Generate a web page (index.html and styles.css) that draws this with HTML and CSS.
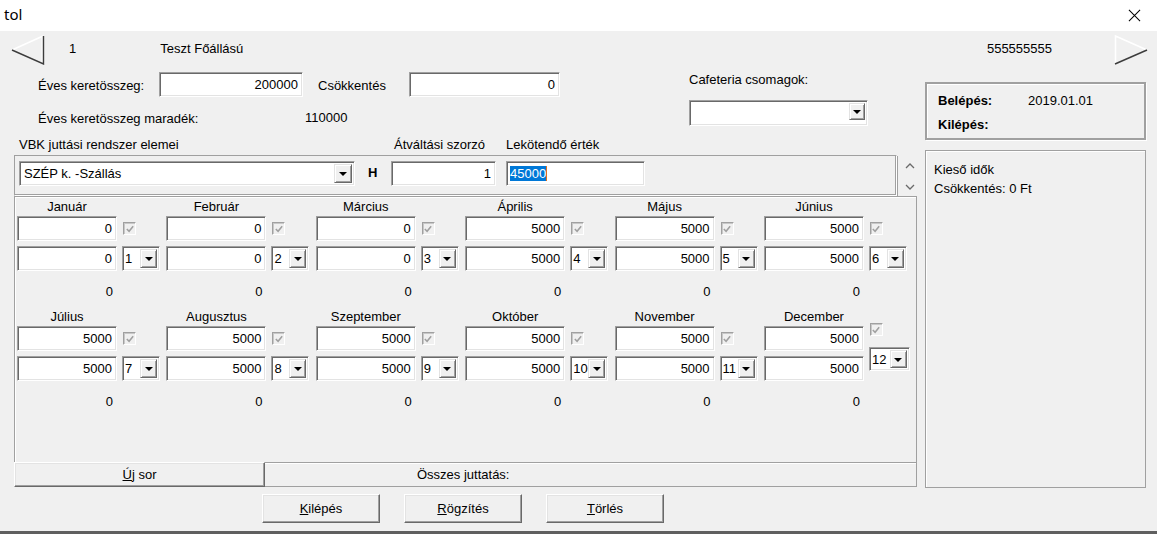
FILE: index.html
```html
<!DOCTYPE html>
<html>
<head>
  <meta charset="UTF-8">
  <title>tol</title>
  <link rel="stylesheet" href="styles.css">
</head>
<body>

<div class="titlebar">
	<span class="title">tol</span>
	<svg class="close" viewBox="0 0 14 14"><path d="M1 1 L13 13 M13 1 L1 13" stroke="#000" stroke-width="1.1" fill="none"/></svg>
</div>

<div class="page">

<div class="nav">
	<svg class="arrow arrow-left" viewBox="0 0 34 30">
		<path d="M1 15 L32 1" stroke="#fff" stroke-width="1.6" fill="none"/>
		<path d="M31 1.5 L31 28.5" stroke="#fff" stroke-width="1" fill="none"/>
		<path d="M32.5 1 L32.5 29 L1 15" stroke="#3c3c3c" stroke-width="1.4" fill="none"/>
	</svg>
	<span class="num">1</span>
	<span class="name">Teszt Főállású</span>
	<span class="code">555555555</span>
	<svg class="arrow arrow-right" viewBox="0 0 34 30">
		<path d="M1.5 29 L1.5 1 L33 15" stroke="#fff" stroke-width="1.6" fill="none"/>
		<path d="M1 29 L33 15" stroke="#3c3c3c" stroke-width="1.5" fill="none"/>
	</svg>
</div>

<div class="main">
	<div class="left">

		<div class="top">
			<div class="fields">
				<div class="row">
					<span class="lbl lbl-eves">Éves keretösszeg:</span>
					<div class="field w-eves">200000</div>
					<span class="lbl lbl-csokk">Csökkentés</span>
					<div class="field w-csokk">0</div>
				</div>
				<div class="row row-rest">
					<span class="lbl lbl-rest">Éves keretösszeg maradék:</span>
					<span>110000</span>
				</div>
			</div>
			<div class="cafe">
				<div class="cafe-lbl">Cafeteria csomagok:</div>
				<div class="combo combo-cafe"><span class="combo-text"></span><span class="combo-btn"><b></b></span></div>
			</div>
		</div>

		<div class="vbk-labels">
			<span class="vbk-lbl1">VBK juttási rendszer elemei</span>
			<span class="vbk-lbl2">Átváltási szorzó</span>
			<span>Lekötendő érték</span>
		</div>

		<div class="vbk-row">
			<div class="vbk-box">
				<div class="combo combo-vbk"><span class="combo-text">SZÉP k. -Szállás</span><span class="combo-btn"><b></b></span></div>
				<span class="h">H</span>
				<div class="field w-szorzo">1</div>
				<div class="field w-lekot"><span class="sel">45000</span><span class="caret"></span></div>
			</div>
			<div class="scroll">
				<svg viewBox="0 0 10 6"><path d="M1 5 L5 1 L9 5" stroke="#6a6a6a" stroke-width="1.3" fill="none"/></svg>
				<svg viewBox="0 0 10 6"><path d="M1 1 L5 5 L9 1" stroke="#6a6a6a" stroke-width="1.3" fill="none"/></svg>
			</div>
		</div>

		<div class="months">
			<div class="month">
				<div class="m-name">Január</div>
				<div class="m-row"><div class="field m-in">0</div><span class="check"><svg viewBox="0 0 11 11"><path d="M2 5.5 L4.5 8 L9 2.5" stroke="#a0a0a0" stroke-width="1.7" fill="none"/></svg></span></div>
				<div class="m-row"><div class="field m-in">0</div><div class="combo combo-sm"><span class="combo-text">1</span><span class="combo-btn"><b></b></span></div></div>
				<div class="m-total">0</div>
			</div>
			<div class="month">
				<div class="m-name">Február</div>
				<div class="m-row"><div class="field m-in">0</div><span class="check"><svg viewBox="0 0 11 11"><path d="M2 5.5 L4.5 8 L9 2.5" stroke="#a0a0a0" stroke-width="1.7" fill="none"/></svg></span></div>
				<div class="m-row"><div class="field m-in">0</div><div class="combo combo-sm"><span class="combo-text">2</span><span class="combo-btn"><b></b></span></div></div>
				<div class="m-total">0</div>
			</div>
			<div class="month">
				<div class="m-name">Március</div>
				<div class="m-row"><div class="field m-in">0</div><span class="check"><svg viewBox="0 0 11 11"><path d="M2 5.5 L4.5 8 L9 2.5" stroke="#a0a0a0" stroke-width="1.7" fill="none"/></svg></span></div>
				<div class="m-row"><div class="field m-in">0</div><div class="combo combo-sm"><span class="combo-text">3</span><span class="combo-btn"><b></b></span></div></div>
				<div class="m-total">0</div>
			</div>
			<div class="month">
				<div class="m-name">Április</div>
				<div class="m-row"><div class="field m-in">5000</div><span class="check"><svg viewBox="0 0 11 11"><path d="M2 5.5 L4.5 8 L9 2.5" stroke="#a0a0a0" stroke-width="1.7" fill="none"/></svg></span></div>
				<div class="m-row"><div class="field m-in">5000</div><div class="combo combo-sm"><span class="combo-text">4</span><span class="combo-btn"><b></b></span></div></div>
				<div class="m-total">0</div>
			</div>
			<div class="month">
				<div class="m-name">Május</div>
				<div class="m-row"><div class="field m-in">5000</div><span class="check"><svg viewBox="0 0 11 11"><path d="M2 5.5 L4.5 8 L9 2.5" stroke="#a0a0a0" stroke-width="1.7" fill="none"/></svg></span></div>
				<div class="m-row"><div class="field m-in">5000</div><div class="combo combo-sm"><span class="combo-text">5</span><span class="combo-btn"><b></b></span></div></div>
				<div class="m-total">0</div>
			</div>
			<div class="month">
				<div class="m-name">Június</div>
				<div class="m-row"><div class="field m-in">5000</div><span class="check"><svg viewBox="0 0 11 11"><path d="M2 5.5 L4.5 8 L9 2.5" stroke="#a0a0a0" stroke-width="1.7" fill="none"/></svg></span></div>
				<div class="m-row"><div class="field m-in">5000</div><div class="combo combo-sm"><span class="combo-text">6</span><span class="combo-btn"><b></b></span></div></div>
				<div class="m-total">0</div>
			</div>

			<div class="month">
				<div class="m-name">Július</div>
				<div class="m-row"><div class="field m-in">5000</div><span class="check"><svg viewBox="0 0 11 11"><path d="M2 5.5 L4.5 8 L9 2.5" stroke="#a0a0a0" stroke-width="1.7" fill="none"/></svg></span></div>
				<div class="m-row"><div class="field m-in">5000</div><div class="combo combo-sm"><span class="combo-text">7</span><span class="combo-btn"><b></b></span></div></div>
				<div class="m-total">0</div>
			</div>
			<div class="month">
				<div class="m-name">Augusztus</div>
				<div class="m-row"><div class="field m-in">5000</div><span class="check"><svg viewBox="0 0 11 11"><path d="M2 5.5 L4.5 8 L9 2.5" stroke="#a0a0a0" stroke-width="1.7" fill="none"/></svg></span></div>
				<div class="m-row"><div class="field m-in">5000</div><div class="combo combo-sm"><span class="combo-text">8</span><span class="combo-btn"><b></b></span></div></div>
				<div class="m-total">0</div>
			</div>
			<div class="month">
				<div class="m-name">Szeptember</div>
				<div class="m-row"><div class="field m-in">5000</div><span class="check"><svg viewBox="0 0 11 11"><path d="M2 5.5 L4.5 8 L9 2.5" stroke="#a0a0a0" stroke-width="1.7" fill="none"/></svg></span></div>
				<div class="m-row"><div class="field m-in">5000</div><div class="combo combo-sm"><span class="combo-text">9</span><span class="combo-btn"><b></b></span></div></div>
				<div class="m-total">0</div>
			</div>
			<div class="month">
				<div class="m-name">Október</div>
				<div class="m-row"><div class="field m-in">5000</div><span class="check"><svg viewBox="0 0 11 11"><path d="M2 5.5 L4.5 8 L9 2.5" stroke="#a0a0a0" stroke-width="1.7" fill="none"/></svg></span></div>
				<div class="m-row"><div class="field m-in">5000</div><div class="combo combo-sm"><span class="combo-text">10</span><span class="combo-btn"><b></b></span></div></div>
				<div class="m-total">0</div>
			</div>
			<div class="month">
				<div class="m-name">November</div>
				<div class="m-row"><div class="field m-in">5000</div><span class="check"><svg viewBox="0 0 11 11"><path d="M2 5.5 L4.5 8 L9 2.5" stroke="#a0a0a0" stroke-width="1.7" fill="none"/></svg></span></div>
				<div class="m-row"><div class="field m-in">5000</div><div class="combo combo-sm"><span class="combo-text">11</span><span class="combo-btn"><b></b></span></div></div>
				<div class="m-total">0</div>
			</div>
			<div class="month">
				<div class="m-name">December</div>
				<div class="m-row"><div class="field m-in">5000</div><span class="check check-dec"><svg viewBox="0 0 11 11"><path d="M2 5.5 L4.5 8 L9 2.5" stroke="#a0a0a0" stroke-width="1.7" fill="none"/></svg></span></div>
				<div class="m-row"><div class="field m-in">5000</div><div class="combo combo-sm combo-dec"><span class="combo-text">12</span><span class="combo-btn"><b></b></span></div></div>
				<div class="m-total">0</div>
			</div>
		</div>

		<div class="sum-bar">
			<button class="btn btn-new"><u>Ú</u>j sor</button>
			<div class="sum-lbl">Összes juttatás:</div>
		</div>
	</div>

	<div class="right">
		<div class="info">
			<div class="info-row"><b class="info-key">Belépés:</b><span>2019.01.01</span></div>
			<div class="info-row"><b class="info-key">Kilépés:</b></div>
		</div>
		<div class="notes">
			<div>Kieső idők</div>
			<div>Csökkentés: 0 Ft</div>
		</div>
	</div>
</div>

<div class="buttons">
	<button class="btn btn-act"><u>K</u>ilépés</button>
	<button class="btn btn-act"><u>R</u>ögzítés</button>
	<button class="btn btn-act"><u>T</u>örlés</button>
</div>

</div>

<div class="edge"></div>

</body>
</html>
```

FILE: styles.css
```css
* {
	box-sizing: border-box;
}

body {
	margin: 0;
	width: 1157px;
	height: 534px;
	overflow: hidden;
	display: flex;
	flex-direction: column;
	background-color: #f0f0f0;
	font-family: "Liberation Sans", Arial, sans-serif;
	font-size: 13px;
	color: #000;
}

/* White window caption */
.titlebar {
	height: 31px;
	flex: none;
	background-color: #fff;
	display: flex;
	align-items: center;
	justify-content: space-between;
	padding: 0 16px 0 4px;
}

.title {
	font-family: "Noto Sans", sans-serif;
	font-size: 15px;
	margin-top: -3px;
}

.close {
	width: 13px;
	height: 13px;
	margin-top: -1px;
}

.page {
	flex: 1;
}

/* Record navigation row */
.nav {
	height: 35px;
	display: flex;
	align-items: center;
}

.arrow {
	width: 34px;
	height: 30px;
	margin-top: 2px;
}

.arrow-left {
	margin-left: 11px;
}

.num {
	margin-left: 24px;
}

.name {
	margin-left: 84px;
}

.code {
	margin-left: auto;
	margin-right: 62px;
}

.arrow-right {
	margin-right: 9px;
}

.main {
	display: flex;
	padding-left: 14px;
	gap: 8px;
}

.left {
	width: 903px;
}

/* Sunken text box */
.field {
	height: 25px;
	background-color: #fff;
	border: 1px solid;
	border-color: #a0a0a0 #fff #fff #a0a0a0;
	box-shadow: inset 1px 1px 0 #696969, inset -1px -1px 0 #e3e3e3;
	display: flex;
	align-items: center;
	justify-content: flex-end;
	padding: 0 4px;
	white-space: nowrap;
}

/* Combo box */
.combo {
	height: 25px;
	background-color: #fff;
	border: 1px solid;
	border-color: #a0a0a0 #fff #fff #a0a0a0;
	box-shadow: inset 1px 1px 0 #696969, inset -1px -1px 0 #e3e3e3;
	display: flex;
	padding: 2px;
	overflow: hidden;
}

.combo-text {
	flex: 1;
	overflow: hidden;
	white-space: nowrap;
	padding-left: 2px;
	line-height: 20px;
}

.combo-btn {
	width: 18px;
	flex: none;
	background-color: #f0f0f0;
	border: 1px solid;
	border-color: #e3e3e3 #696969 #696969 #e3e3e3;
	box-shadow: inset 1px 1px 0 #fff, inset -1px -1px 0 #a0a0a0;
	display: flex;
	align-items: center;
	justify-content: center;
}

.combo-btn b {
	width: 0;
	height: 0;
	border-top: 4px solid #000;
	border-left: 4px solid transparent;
	border-right: 4px solid transparent;
	margin-top: 1px;
}

/* Top fields */
.top {
	display: flex;
	padding-top: 6px;
}

.fields {
	width: 675px;
}

.row {
	display: flex;
	align-items: center;
	height: 25px;
}

.lbl {
	padding-top: 2px;
}

.lbl-eves {
	padding-left: 24px;
	width: 145px;
}

.w-eves {
	width: 144px;
}

.lbl-csokk {
	margin-left: 15px;
	width: 91px;
}

.w-csokk {
	width: 151px;
}

.row-rest {
	margin-top: 10px;
	height: 20px;
}

.lbl-rest {
	padding-left: 24px;
	width: 291px;
}

.cafe-lbl {
	line-height: 16px;
}

.combo-cafe {
	width: 179px;
	height: 26px;
	margin-top: 12px;
	align-items: flex-start;
}

.combo-cafe .combo-btn {
	height: 17px;
	width: 16px;
}

/* VBK element row */
.vbk-labels {
	display: flex;
	margin-top: 9px;
	line-height: 18px;
}

.vbk-lbl1 {
	padding-left: 5px;
	width: 380px;
}

.vbk-lbl2 {
	width: 112px;
}

.vbk-row {
	display: flex;
	margin-top: 1px;
}

.vbk-box {
	width: 883px;
	height: 41px;
	border: 1px solid;
	border-color: #a0a0a0 #fff #fff #a0a0a0;
	box-shadow: inset -1px -1px 0 #a0a0a0, 1px 1px 0 #a0a0a0;
	display: flex;
	align-items: flex-start;
	padding: 5px 4px;
}

.combo-vbk {
	width: 336px;
}

.h {
	font-weight: bold;
	margin: 4px 0 0 13px;
	width: 10px;
}

.w-szorzo {
	width: 105px;
	margin-left: 13px;
}

.w-lekot {
	width: 139px;
	margin-left: 10px;
	justify-content: flex-start;
	padding-left: 3px;
}

.sel {
	background-color: #0078d7;
	color: #fff;
	line-height: 15px;
}

.caret {
	width: 1px;
	height: 15px;
	background-color: #e07020;
}

.scroll {
	display: flex;
	flex-direction: column;
	gap: 15px;
	padding: 8px 0 0 8px;
}

.scroll svg {
	width: 10px;
	height: 6px;
}

/* Month grid */
.months {
	border: 1px solid #a0a0a0;
	border-bottom: none;
	box-shadow: inset 1px 1px 0 #fff;
	height: 266px;
	padding-left: 2px;
	display: grid;
	grid-template-columns: repeat(6, 149.4px);
	grid-auto-rows: 110px;
}

.month {
	display: flex;
	flex-direction: column;
}

.m-name {
	width: 100px;
	text-align: center;
	line-height: 19px;
	height: 19px;
}

.m-row {
	display: flex;
	align-items: center;
	gap: 5px;
	height: 25px;
}

.m-row + .m-row {
	margin-top: 5px;
}

.m-in {
	width: 100px;
}

.check {
	width: 13px;
	height: 13px;
	margin-left: 1px;
	border: 1px solid;
	border-color: #a0a0a0 #fff #fff #a0a0a0;
	box-shadow: inset 1px 1px 0 #c8c8c8;
	background-color: #f0f0f0;
	display: flex;
	align-items: center;
	justify-content: center;
}

.check svg {
	width: 10px;
	height: 10px;
}

.check-dec {
	align-self: flex-start;
	margin-top: -3px;
}

/* Small month combo - narrow text area like the original */
.combo-sm {
	width: 38px;
	padding: 2px 2px 2px 1px;
}

.combo-sm .combo-text {
	padding-left: 1px;
}

.combo-sm .combo-btn {
	width: 17px;
}

.combo-dec {
	align-self: flex-start;
	margin-top: -9px;
	width: 41px;
	height: 24px;
}

.m-total {
	width: 100px;
	text-align: right;
	padding-right: 4px;
	margin-top: 11px;
	line-height: 20px;
}

/* Raised push buttons */
.btn {
	font-family: inherit;
	font-size: 13px;
	color: #000;
	background-color: #f0f0f0;
	border: 1px solid;
	border-color: #fff #696969 #696969 #fff;
	box-shadow: inset -1px -1px 0 #a0a0a0, inset 1px 1px 0 #e3e3e3;
	padding: 0;
	cursor: pointer;
}

.sum-bar {
	display: flex;
	height: 25px;
}

.btn-new {
	width: 251px;
	height: 25px;
}

.sum-lbl {
	flex: 1;
	border: 1px solid #a0a0a0;
	border-left: none;
	box-shadow: inset 0 1px 0 #fff;
	line-height: 23px;
	padding-left: 152px;
}

/* Right side info column */
.right {
	width: 221px;
}

.info {
	margin-top: 16px;
	height: 58px;
	border: 2px solid #a0a0a0;
	box-shadow: inset 1px 1px 0 #fff, 1px 1px 0 #fff;
	padding: 5px 0 0 11px;
}

.info-row {
	display: flex;
	line-height: 24px;
}

.info-key {
	width: 90px;
}

.notes {
	margin-top: 10px;
	height: 338px;
	border: 1px solid #a0a0a0;
	box-shadow: inset 1px 1px 0 #fff;
	padding: 9px 0 0 8px;
	line-height: 19px;
}

.buttons {
	display: flex;
	gap: 24px;
	margin: 6px 0 0 262px;
}

.btn-act {
	width: 118px;
	height: 29px;
}

.edge {
	height: 3px;
	flex: none;
	background-color: #5f5f5f;
}
```
